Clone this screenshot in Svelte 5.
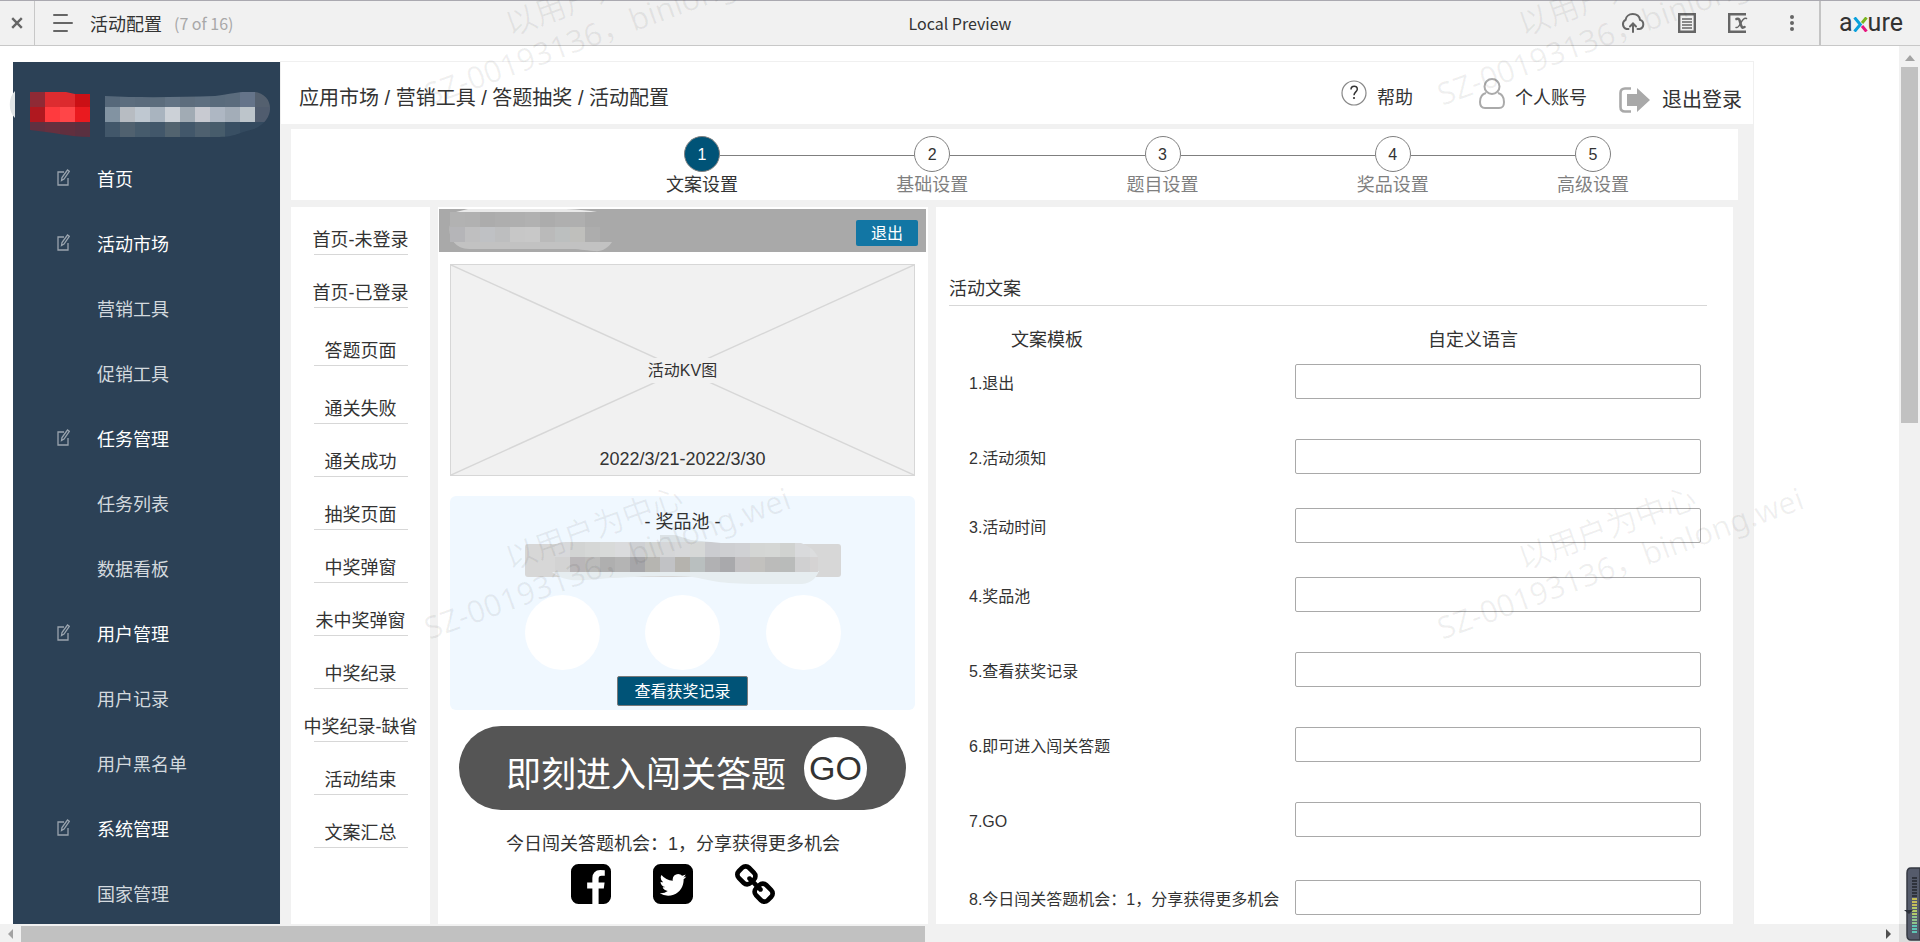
<script>
  const menu = [
    { text: '首页', top: true },
    { text: '活动市场', top: true },
    { text: '营销工具' },
    { text: '促销工具' },
    { text: '任务管理', top: true },
    { text: '任务列表' },
    { text: '数据看板' },
    { text: '用户管理', top: true },
    { text: '用户记录' },
    { text: '用户黑名单' },
    { text: '系统管理', top: true },
    { text: '国家管理' }
  ];
  const steps = [
    { text: '文案设置', active: true, span: 194 },
    { text: '基础设置', span: 194 },
    { text: '题目设置', span: 194 },
    { text: '奖品设置', span: 164 },
    { text: '高级设置' }
  ];
  const pages = [
    { text: '首页-未登录' },
    { text: '首页-已登录' },
    { text: '答题页面', far: true },
    { text: '通关失败', far: true },
    { text: '通关成功' },
    { text: '抽奖页面' },
    { text: '中奖弹窗' },
    { text: '未中奖弹窗' },
    { text: '中奖纪录' },
    { text: '中奖纪录-缺省' },
    { text: '活动结束' },
    { text: '文案汇总' }
  ];
  const fields = [
    { text: '1.退出' },
    { text: '2.活动须知', close: true },
    { text: '3.活动时间', close: true },
    { text: '4.奖品池' },
    { text: '5.查看获奖记录' },
    { text: '6.即可进入闯关答题' },
    { text: '7.GO', far: true },
    { text: '8.今日闯关答题机会：1，分享获得更多机会' }
  ];
  const brandCells = [
    ['#8f2a35', '#dd2c30', '#dc2a2e', '#cb1015'],
    ['#b0181f', '#ff3a3e', '#ff4548', '#ea1a1f'],
    ['#5f3141', '#66303f', '#612f3e', '#5a3040']
  ];
  const nameCells = [
    ['#56687a', '#5c6d7e', '#5a6b7c', '#5c6d7d', '#627384', '#5d6d7d', '#5e6f80', '#596b7c', '#5b6c7d', '#65748a', '#54606f'],
    ['#8293a2', '#b7bcc2', '#bfc8d1', '#a9b4bf', '#ccd1d7', '#a1abb4', '#c8cad1', '#aeb7c3', '#a3adb8', '#bdc5cb', '#505c6e'],
    ['#42576a', '#50616f', '#465b6c', '#42576a', '#52636f', '#42576a', '#4e606f', '#475c6b', '#394f63', '#344a5f', '#344a5f']
  ];
  const tipTop = ['#d8d9db', '#d2d4d3', '#d5d7d6', '#d8dad9', '#dadbdd', '#ced0d3', '#d3d5d3', '#d5d6d8', '#d7d8da', '#d6d8d7', '#cbccd0', '#cecfd2', '#d0d1d4', '#d4d6d4', '#d5d7d5', '#d0d2d0', '#d9dadc', '#dcddde'];
  const tipLow = ['#d3d3d3', '#b9b6b8', '#bbbbba', '#afafaf', '#b4b4b4', '#a6a6a9', '#b6b5b1', '#c1c2c5', '#b5b3ae', '#b9bfbf', '#b1b1b3', '#a9a9ac', '#c2c0c2', '#c2c1be', '#bbbbba', '#b9bbba', '#d0d0d1', '#d5d3d3'];
  const userTop = ['#b2b2b2', '#b1b1b1', '#acacac', '#aeaeae', '#afafaf', '#b1b1b1', '#acacac', '#afafaf', '#afafaf', '#acacac'];
  const userLow = ['#b5b5b8', '#bfbfc0', '#bfc1c4', '#bdbebf', '#c7c7c7', '#c8c8c8', '#bababa', '#bcbfbf', '#bfbfbc', '#adadad'];
  const marks = [
    { x: 435, y: 104 },
    { x: 1448, y: 104 },
    { x: 435, y: 638 },
    { x: 1448, y: 638 }
  ];
  const meter = Array.from({ length: 19 }, (_, i) => ({
    y: 10 + i * 3,
    color: i < 7 ? '#2f333c' : i < 10 ? '#c5bd58' : i < 13 ? '#b4cb69' : i < 16 ? '#8fc48a' : '#5fc4b4'
  }));
</script>

<div class="app">
  <header class="toolbar">
    <button class="close" aria-label="关闭">
      <svg width="12" height="12" viewBox="0 0 10 10"><path d="M1 1l8 8M9 1L1 9" stroke="#666" stroke-width="2" /></svg>
    </button>
    <div class="doc">
      <svg width="20" height="18" viewBox="0 0 20 18"><path d="M1 1h13M1 9h18M1 17h13" stroke="#666" stroke-width="2" stroke-linecap="round" /></svg>
      <span class="doc-name">活动配置</span>
      <span class="doc-count">(7 of 16)</span>
    </div>
    <div class="preview">Local Preview</div>
    <div class="tools">
      <button aria-label="分享">
        <svg width="26" height="20" viewBox="0 0 26 20" fill="none" stroke="#666" stroke-width="2" stroke-linecap="round"><path d="M8.500 16H6.500A5 5 0 0 1 5.600 6.800C6 3.500 9 1 12.700 1c4 0 6.800 2.500 7.300 5.900A4.700 4.700 0 0 1 19.500 16H17.500" /><path d="M13 19v-8M10 13.500l3-3 3 3" /></svg>
      </button>
      <button aria-label="说明">
        <svg width="18" height="20" viewBox="0 0 18 20"><path d="M1.200 1.200h15.600v17.600H1.200z" fill="none" stroke="#666" stroke-width="2.400" /><path d="M4 6h10M4 9h10M4 12h10M4 15h10" stroke="#666" stroke-width="1.700" /></svg>
      </button>
      <button aria-label="变量">
        <svg width="20" height="20" viewBox="0 0 20 20" fill="none" stroke="#666"><path d="M18 1.200H1.200v17.600H18" stroke-width="2.400" /><path d="M8.500 6c3-1 3 1 4 4.500s1.500 5 4 3.500" stroke-width="2.600" stroke-linecap="round" /><path d="M18.500 5.500c-3-1-4.500 2-6 5s-2.500 4.500-4.500 4" stroke-width="1.500" stroke-linecap="round" /></svg>
      </button>
      <button aria-label="更多">
        <svg width="6" height="16" viewBox="0 0 6 16" fill="#666"><circle cx="3" cy="2" r="2" /><circle cx="3" cy="8" r="2" /><circle cx="3" cy="14" r="2" /></svg>
      </button>
    </div>
    <div class="logo">
      <span>a</span><svg width="15" height="15" viewBox="0 0 14 15" fill="none" stroke-width="3"><path d="M13 .500L8.500 6" stroke="#7ab51d" /><path d="M8.500 9l4.500 5.500" stroke="#e6177e" /><path d="M1 .500l5.800 7L1 14.500" stroke="#0aa0dc" /></svg><span>ure</span>
    </div>
  </header>

  <div class="frame">
    <div class="canvas">
      <nav class="sidebar">
        <svg class="brand" width="267" height="85" viewBox="0 0 267 85">
          <clipPath id="red"><path d="M17 30h36l9 2h15v43c-20 0-38-5-60-7z" /></clipPath>
          <clipPath id="name"><path d="M92 34c38 2 76 1 110 0 16-2 22-4 31-4 29-4 32 28 8 37-19 5-19 8-38 8H92z" /></clipPath>
          <path d="M2 29v27c-7-6-7-21 0-27z" fill="#e1e5e7" />
          <g clip-path="url(#red)">
            {#each brandCells as row, r}{#each row as c, i}<rect x={17 + i * 15} y={30 + r * 15} width="15" height="15" fill={c} />{/each}{/each}
          </g>
          <g clip-path="url(#name)">
            {#each nameCells as row, r}{#each row as c, i}<rect x={92 + i * 15} y={30 + r * 15} width="15" height="15" fill={c} />{/each}{/each}
          </g>
        </svg>
        <ul>
          {#each menu as item}
            <li>
              <a href="#menu" class:top={item.top}>
                {#if item.top}
                  <svg width="13" height="17" viewBox="0 0 13 17" fill="none" stroke="#9aa4ae" stroke-width="1.300"><path d="M7 3H1v13h10V9" /><path d="M4.500 11.500l.500-3L10.500 1l1.800 1.300L7 10z" /></svg>
                {/if}
                <span>{item.text}</span>
              </a>
            </li>
          {/each}
        </ul>
      </nav>

      <main>
        <div class="topbar">
          <div class="crumbs">应用市场 / 营销工具 / 答题抽奖 / 活动配置</div>
          <div class="account">
            <a href="#help">
              <svg class="raised" width="26" height="26" viewBox="0 0 26 26"><circle cx="13" cy="13" r="12" fill="none" stroke="#888" stroke-width="1.200" /><path d="M10 9.500c0-4.500 6.500-4.300 6.300-.300-.100 2.600-3.300 2.800-3.300 6" fill="none" stroke="#333" stroke-width="1.500" /><circle cx="13" cy="18" r="1.100" fill="#333" /></svg>
              <span>帮助</span>
            </a>
            <a href="#account" class="user">
              <svg class="raised" width="26" height="31" viewBox="0 0 26 31" fill="none" stroke="#aaa" stroke-width="2"><ellipse cx="13" cy="8.500" rx="7.500" ry="7.500" /><path d="M7 15c-4 1-6 4-6 9 0 4 1 6 5 6h14c4 0 5-2 5-6 0-5-2-8-6-9" /></svg>
              <span>个人账号</span>
            </a>
            <a href="#logout" class="logout">
              <svg width="31" height="26" viewBox="0 0 31 26"><path d="M12 1.500H6C3 1.500 1.500 3 1.500 6v14c0 3 1.500 4.500 4.500 4.500h6" fill="none" stroke="#a9a9a9" stroke-width="2.600" /><path d="M8 7h10V1l13 12-13 12v-6H8z" fill="#a9a9a9" /></svg>
              <span>退出登录</span>
            </a>
          </div>
        </div>

        <div class="body">
          <ol class="steps">
            {#each steps as step, i}
              <li class:active={step.active}>
                <span class="num">{i + 1}</span>
                <span class="step-name">{step.text}</span>
              </li>
              {#if step.span}<li class="link" style:flex-grow={step.span} aria-hidden="true"></li>{/if}
            {/each}
          </ol>

          <div class="columns">
            <ul class="pages">
              {#each pages as page}
                <li class:far={page.far}><a href="#page">{page.text}</a></li>
              {/each}
            </ul>

            <section class="phone">
              <div class="phone-head">
                <svg width="180" height="43" viewBox="0 0 180 43">
                  <path d="M22 1h100l32 3v29h14c-4 6-10 10-18 9-10-1-16-2-24-2H25C-1 39 0 4 22 1z" fill="#c2c2c2" />
                  <path d="M24 0h98q20 1 31 3H12z" fill="#e9e9e9" />
                  {#each userTop as c, i}<rect x={6 + i * 15} y="3" width="15" height="15" fill={c} />{/each}
                  {#each userLow as c, i}<rect x={6 + i * 15} y="18" width="15" height="15" fill={c} />{/each}
                  <path d="M141 3h39v15h-39zM156 18h24v15h-24z" fill="#a9a9a9" />
                </svg>
                <button>退出</button>
              </div>
              <div class="kv">
                <svg viewBox="0 0 465 212" preserveAspectRatio="none" aria-hidden="true"><path d="M0 0l465 212M465 0L0 212" stroke="#d7d7d7" stroke-width="1.500" /></svg>
                <span class="kv-name">活动KV图</span>
                <span class="kv-date">2022/3/21-2022/3/30</span>
              </div>
              <div class="pool">
                <h2>- 奖品池 -</h2>
                <svg class="tip" width="316" height="52" viewBox="0 0 316 52">
                  <rect y="9" width="316" height="33" rx="3" fill="#d7d7d7" />
                  <path d="M27 37c15 12 30 8 60 6 35-2 60-3 80-1 20 3 20 6 60 7h50c10-1 14-6 17-13z" fill="#e6edf0" />
                  <clipPath id="tipclip"><path d="M29 12q3-5 12-5h94v-7h15l16 5 30 3h80q12 4 17 14v15H24z" /></clipPath>
                  <g clip-path="url(#tipclip)">
                    <rect x="120" width="80" height="7" fill="#dbe2e6" />
                    {#each tipTop as c, i}<rect x={30 + i * 15} y="7" width="15" height="15" fill={c} />{/each}
                    {#each tipLow as c, i}<rect x={30 + i * 15} y="22" width="15" height="15" fill={c} />{/each}
                  </g>
                </svg>
                <div class="prizes"><i></i><i></i><i></i></div>
                <button>查看获奖记录</button>
              </div>
              <button class="start"><span>即刻进入闯关答题</span><b>GO</b></button>
              <div class="share">
                <p>今日闯关答题机会：1，分享获得更多机会</p>
                <div class="socials">
                  <a href="#facebook" aria-label="Facebook"><svg width="40" height="40" viewBox="0 0 1536 1536"><path d="M1248 0q119 0 203.500 84.500t84.500 203.500v960q0 119-84.500 203.500t-203.500 84.500h-188v-595h199l30-232h-229v-148q0-56 23.500-84t91.500-28l122-1v-207q-63-9-178-9-136 0-217.500 80t-81.500 226v171h-200v232h200v595h-532q-119 0-203.500-84.500t-84.500-203.500v-960q0-119 84.500-203.500t203.500-84.500h960z" /></svg></a>
                  <a href="#twitter" aria-label="Twitter"><svg width="40" height="40" viewBox="0 0 1536 1536"><path d="M1280 482q-56 25-121 34 68-40 93-117-65 38-134 51-61-66-153-66-87 0-148.500 61.500t-61.500 148.500q0 29 5 48-129-7-242-65t-192-155q-29 50-29 106 0 114 91 175-47-1-100-26v1q0 75 50 133.500t123 72.500q-29 8-51 8-13 0-39-4 21 63 74.500 104t121.500 42q-116 90-261 90-26 0-50-3 148 94 322 94 112 0 210-35.500t168-95 120.500-137 75-162 24.500-168.500q0-18-1-27 63-45 105-109zm256-194v960q0 119-84.500 203.500t-203.500 84.500h-960q-119 0-203.500-84.500t-84.500-203.500v-960q0-119 84.500-203.500t203.500-84.500h960q119 0 203.500 84.500t84.500 203.500z" /></svg></a>
                  <a href="#link" aria-label="复制链接"><svg width="40" height="40" viewBox="16 16 1632 1632"><path d="M1456 1216q0-40-28-68l-208-208q-28-28-68-28-42 0-72 32 3 3 19 18.500t21.500 21.500 15 19 13 25.500 3.500 27.500q0 40-28 68t-68 28q-15 0-27.500-3.500t-25.500-13-19-15-21.500-21.500-18.500-19q-33 31-33 73 0 40 28 68l206 207q27 27 68 27 40 0 68-26l147-146q28-28 28-67zm-703-705q0-40-28-68l-206-207q-28-28-68-28-39 0-68 27l-147 146q-28 28-28 67 0 40 28 68l208 208q27 27 68 27 42 0 72-31-3-3-19-18.500t-21.500-21.500-15-19-13-25.500-3.500-27.500q0-40 28-68t68-28q15 0 27.500 3.500t25.500 13 19 15 21.500 21.500 18.500 19q33-31 33-73zm895 705q0 120-85 203l-147 146q-83 83-203 83-121 0-204-85l-206-207q-83-83-83-203 0-123 88-209l-88-88q-86 88-208 88-120 0-204-84l-208-208q-84-84-84-204t85-203l147-146q83-83 203-83 121 0 204 85l206 207q83 83 83 203 0 123-88 209l88 88q86-88 208-88 120 0 204 84l208 208q84 84 84 204z" /></svg></a>
                </div>
              </div>
            </section>

            <form class="copy">
              <h1>活动文案</h1>
              <div class="heads"><span>文案模板</span><span>自定义语言</span></div>
              {#each fields as field, i}
                <div class="field" class:near={field.close} class:far={field.far}>
                  <label for={'copy-' + i}>{field.text}</label>
                  <input id={'copy-' + i} type="text" />
                </div>
              {/each}
            </form>
          </div>
        </div>
      </main>
    </div>

    <div class="vbar">
      <svg width="10" height="6" viewBox="0 0 10 6"><path d="M0 6l5-6 5 6z" fill="#a3a3a3" /></svg>
      <div class="vthumb"></div>
    </div>
    <div class="hbar">
      <svg width="5" height="10" viewBox="0 0 5 10"><path d="M5 0v10L0 5z" fill="#a3a3a3" /></svg>
      <div class="hthumb"></div>
      <svg width="5" height="10" viewBox="0 0 5 10"><path d="M0 0v10l5-5z" fill="#505050" /></svg>
    </div>
    <div class="corner"></div>
  </div>

  <svg class="watermark" aria-hidden="true">
    {#each marks as m}
      <g transform={`translate(${m.x} ${m.y}) rotate(-20)`}>
        <text x="94" y="-38">以用户为中心</text>
        <text x="-6" y="0">SZ-00193136，binlong.wei</text>
      </g>
    {/each}
  </svg>

  <svg class="meter" width="16" height="74" viewBox="0 0 16 74" aria-hidden="true">
    <path d="M16 1H7Q3 1 3 6v62q0 5 4 5h9z" fill="#555b6b" stroke="#343842" stroke-width="1.500" />
    {#each meter as bar}<rect x="8" y={bar.y} width="5" height="2" fill={bar.color} />{/each}
    <path d="M0 43h9l-4 4z" fill="#2c303a" />
  </svg>
</div>

<style>
  :global(body) { margin: 0; background: #fff; }
  * { box-sizing: border-box; }
  .app { position: relative; display: flex; flex-direction: column; height: 100vh; overflow: hidden; font: 18px/24px "Liberation Sans", "Noto Sans CJK SC", sans-serif; color: #333; }
  button, input { font: inherit; }
  button { border: 0; padding: 0; cursor: pointer; }
  a { color: inherit; text-decoration: none; }
  ul, ol { list-style: none; margin: 0; padding: 0; }
  h1, h2, p { margin: 0; font-weight: 400; font-size: 18px; }
  svg { display: block; flex: none; }

  .toolbar { position: relative; flex: none; display: flex; height: 46px; background: #f1f1f1; border-top: 1px solid #aaa9b0; border-bottom: 1px solid #c8c8c8; font-family: "Noto Sans CJK SC", sans-serif; }
  .close { width: 35px; display: flex; align-items: center; justify-content: center; background: none; border-right: 1px solid #c8c8c8; }
  .doc { flex: 1 1 0; min-width: 0; display: flex; align-items: center; padding-left: 18px; }
  .doc-name { margin-left: 17px; }
  .doc-count { margin-left: 12px; font-size: 16px; color: #a8a8a8; }
  .preview { position: absolute; inset: 0; display: flex; align-items: center; justify-content: center; font-size: 16px; pointer-events: none; }
  .tools { flex: 1; min-width: 0; display: flex; align-items: center; justify-content: flex-end; gap: 32px; padding-right: 24px; }
  .tools button { background: none; }
  .tools button:last-child { margin-left: 9px; }
  .logo { display: flex; align-items: center; width: 101px; padding-left: 18px; border-left: 2px solid #c4c4c4; font: 400 25px/30px Roboto, sans-serif; color: #333; }
  .logo svg { margin-top: 2px; }

  .frame { flex: 1; min-height: 0; display: grid; grid-template-columns: minmax(0, 1fr) 21px; grid-template-rows: minmax(0, 1fr) 18px; }
  .canvas { display: flex; overflow: hidden; padding: 15px 145px 0 13px; }
  .sidebar { flex: none; width: 267px; margin-top: 1px; background: #2c4156; }
  .sidebar a { display: flex; align-items: center; height: 65px; padding-left: 84px; color: #d3d9de; }
  .sidebar a.top { padding-left: 44px; gap: 27px; color: #fff; }
  .sidebar a svg { margin-bottom: 4px; }
  .brand { overflow: visible; }

  main { flex: 1; min-width: 0; display: flex; flex-direction: column; border: 1px solid #f0f0f0; border-bottom: 0; }
  .topbar { flex: none; display: flex; justify-content: space-between; align-items: center; height: 62px; padding: 10px 11px 0 18px; }
  .crumbs { font-size: 20px; }
  .account { display: flex; align-items: center; }
  .account a { display: flex; align-items: center; gap: 10px; }
  .account .raised { margin-bottom: 10px; }
  .account .user { margin-left: 66px; }
  .account .logout { gap: 12px; margin-left: 32px; padding-top: 4px; font-size: 20px; }
  .body { flex: 1; background: #f1f1f1; padding: 5px 15px 0 10px; }
  .steps { display: flex; height: 71px; padding: 7px 127px 0 393px; background: #fff; }
  .steps li { display: flex; flex-direction: column; align-items: center; gap: 1px; width: 36px; flex: none; white-space: nowrap; color: #7f7f7f; }
  .num { flex: none; width: 36px; height: 36px; border: 1px solid #7f7f7f; border-radius: 50%; text-align: center; font-size: 16px; line-height: 35px; color: #333; }
  .active .num { background: #005377; color: #fff; }
  .steps .active { color: #333; }
  .steps .link { flex: 1 1 0; width: auto; height: 1px; margin-top: 19px; background: #7f7f7f; }

  .columns { display: flex; gap: 8px; height: 100%; margin: 7px 5px 0 0; }
  .pages { flex: none; width: 139px; padding-top: 21px; background: #fff; }
  .pages li { display: flex; flex-direction: column; align-items: center; width: 94px; margin: 0 auto 26px; padding-bottom: 2px; border-bottom: 1px solid #d7d7d7; white-space: nowrap; }
  .pages .far { margin-top: 31px; }

  .phone { flex: none; width: 490px; padding: 2px 2px 0 1px; background: #fff; }
  .phone-head { display: flex; justify-content: space-between; align-items: center; height: 43px; padding: 0 8px 0 5px; background: #a9a9a9; }
  .phone-head button { width: 62px; height: 26px; margin-top: 4px; padding-top: 2px; border-radius: 2px; background: #1276a4; color: #fff; font-size: 16px; }
  .kv { display: grid; height: 212px; margin: 12px 11px 0; background: #f1f1f1; border: 1px solid #d7d7d7; }
  .kv > * { grid-area: 1 / 1; }
  .kv svg { width: 100%; height: 210px; }
  .kv-name { place-self: center; padding: 1px 2px 0; background: #f1f1f1; font-size: 16px; }
  .kv-date { place-self: end center; margin-bottom: 4px; }
  .pool { display: flex; flex-direction: column; align-items: center; height: 214px; margin: 20px 11px 0; padding-top: 14px; border-radius: 6px; background: #f0f8ff; }
  .tip { margin-top: 1px; }
  .prizes { display: flex; justify-content: space-between; width: 316px; margin-top: 8px; }
  .prizes i { width: 75px; height: 75px; border-radius: 50%; background: #fff; }
  .pool button { width: 131px; height: 30px; margin-top: 6px; padding-top: 2px; border: 1px solid #797979; border-radius: 2px; background: #005377; color: #fff; font-size: 16px; }
  .start { display: flex; align-items: center; width: 447px; height: 84px; margin: 16px 20px 0; padding-left: 47px; border-radius: 42px; background: #555; color: #fff; font-size: 35px; line-height: 40px; }
  .start span { padding-top: 14px; }
  .start b { width: 63px; height: 63px; margin-left: 18px; border-radius: 50%; background: #fff; color: #333; font-weight: 400; font-size: 34px; line-height: 63px; text-align: center; }
  .share { display: flex; flex-direction: column; align-items: center; padding: 20px 19px 0 0; }
  .share p { line-height: 28px; }
  .socials { display: flex; gap: 42px; margin-top: 6px; }

  .copy { flex: 1; min-width: 0; padding: 64px 26px 0 13px; background: #fff; }
  .copy h1 { padding-top: 2px; line-height: 32px; border-bottom: 1px solid #d7d7d7; }
  .heads, .field { display: grid; grid-template-columns: 346px minmax(0, 1fr); padding-right: 6px; }
  .heads { margin: 22px 0 12px; text-align: center; }
  .heads span:first-child { padding-right: 150px; }
  .heads span:last-child { padding-right: 50px; }
  .field { height: 75px; align-items: start; }
  .field.near { height: 69px; }
  .field.far { height: 78px; }
  .field label { padding: 8px 0 0 20px; font-size: 16px; white-space: nowrap; }
  .field input { width: 100%; height: 35px; padding: 0 8px; border: 1px solid #a9a9a9; border-radius: 2px; background: #fff; outline: none; }

  .vbar { display: flex; flex-direction: column; align-items: center; background: #f1f1f1; padding-top: 9px; }
  .vthumb { width: 17px; height: 41%; margin-top: 6px; background: #c1c1c1; }
  .hbar { display: flex; align-items: center; padding: 2px 8px 0; background: #f1f1f1; }
  .hthumb { width: 48%; height: 16px; margin: 0 auto 0 8px; background: #c1c1c1; }
  .corner { background: #dcdcdc; }

  .watermark { position: absolute; inset: 0; width: 100%; height: 100%; pointer-events: none; fill: #000; fill-opacity: 0.06; stroke: #000; stroke-opacity: 0.02; font: 31px "Noto Sans", "Noto Sans CJK SC", sans-serif; }
  .meter { position: absolute; right: 0; bottom: 1px; }
</style>
